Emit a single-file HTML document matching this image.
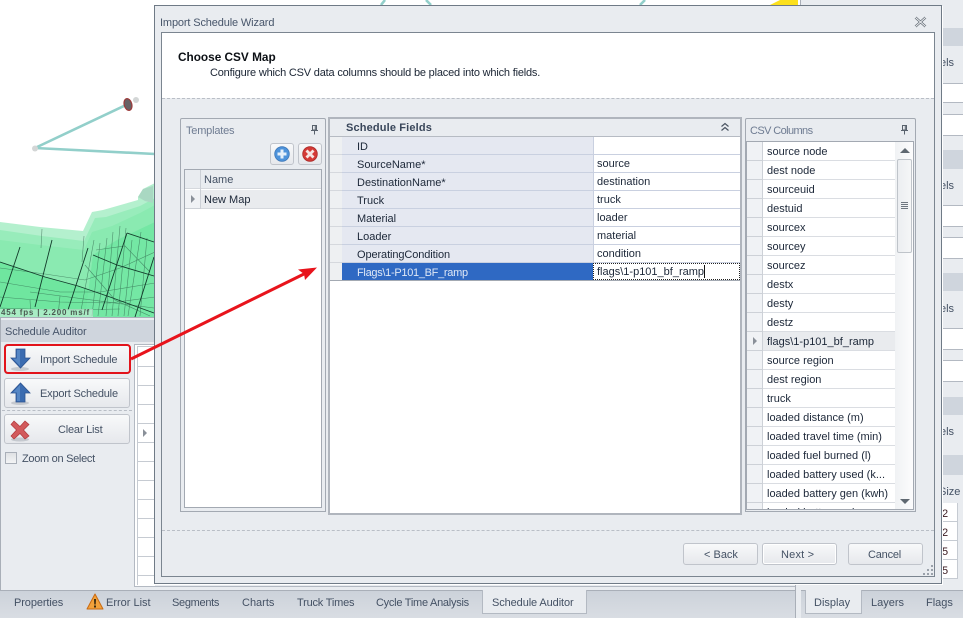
<!DOCTYPE html>
<html><head><meta charset="utf-8"><style>
html,body{margin:0;padding:0;background:#fff}
#p{position:relative;width:963px;height:618px;overflow:hidden;background:#fff;font-family:"Liberation Sans",sans-serif;font-size:11px;color:#445164}
#p div,#p span{position:absolute;box-sizing:border-box}
.t{white-space:nowrap;line-height:14px;margin-top:1px}
.btn{border:1px solid #c0c4cb;border-radius:3px;background:linear-gradient(#f8f9fa,#e6e8ec)}
.d{color:#1c2738}
.tb{letter-spacing:-.1px}
.sb{letter-spacing:-.19px}
.dash{height:1px;border-top:1px dashed #b9bec6}
svg{position:absolute}
</style></head><body><div id="p">

<!-- background map -->
<svg style="left:0;top:0" width="800" height="320" viewBox="0 0 800 320">
<polygon points="0,222 40,227 83,231 92,212 103,210 138,200 138,197 143,189 155,183 155,317 0,317" fill="#b4f0ce"/>
<polygon points="0,230 42,236 84,241 95,218 106,217 140,206 155,198 155,317 0,317" fill="#98ecbb"/>
<polygon points="0,240 40,245 84,250 92,232 112,226 140,213 155,205 155,317 0,317" fill="#8aeab1"/>
<polygon points="0,262 45,277 78,286 110,297 154,313 154,317 0,317" fill="#6fe69f"/>
<polygon points="93,255 117,240 155,222 155,317 85,317" fill="#74e7a4"/>
<polygon points="138,197 143,189 153,186 153,203 145,201" fill="#a9d8c2"/>
<g fill="none" stroke="#2a5a44" stroke-width=".6" opacity=".62">
<path d="M0,268 45,274 85,280 120,268 155,252M0,282 60,292 100,292 155,283M0,297 60,302 110,303 155,297M30,292 154,308M0,308 60,310 120,309"/>
<path d="M42,229 41,248M84,236 82,262M94,240 80,316M100,243 92,316M107,238 98,316M113,232 106,316M120,226 112,316M126,228 118,316M132,240 124,316M141,232 128,316M147,238 140,316"/>
<path d="M85,265 115,300 150,316M96,250 125,246 150,272M30,300 31,316M60,296 58,316"/>
</g>
<g fill="none" stroke="#123a2a" stroke-width=".9">
<path d="M0,262 45,277 78,286 110,297 154,313M93,255 117,265 154,276M127,233 154,242M20,247 0,307M52,240 35,307M88,248 68,310M127,233 102,310M154,257 135,317"/>
</g>
<path d="M35,148 128,104M35,148 155,154" stroke="#92cfca" stroke-width="2.600" fill="none"/>
<path d="M381,5 385,0M431,5 426,0M640,5 645,0" stroke="#92cfca" stroke-width="2.600" fill="none"/>
<circle cx="35" cy="148.500" r="3" fill="#d3d6d6"/><circle cx="136" cy="100" r="3" fill="#d3d6d6"/>
<ellipse cx="128" cy="104.500" rx="3.800" ry="6" transform="rotate(-15 128 104.500)" fill="#676265" stroke="#9c3a3a" stroke-width="1.200"/>
<polygon points="770,5 778,1 780,0 798,0 798,5" fill="#fce01c"/>
</svg>
<div style="left:0;top:309px;width:93px;height:8px;background:rgba(215,240,225,.55)"></div>
<div class="t" style="left:1px;top:305px;font-size:8px;font-weight:bold;color:#4b5a52;letter-spacing:.8px">454 fps | 2.200 ms/f</div>

<!-- left dock -->
<div style="left:0;top:317px;width:155px;height:273px;background:#e9ecf0;border-top:1px solid #a9afb8;border-left:1px solid #a9afb8"></div>
<div style="left:155px;top:584px;width:645px;height:6px;background:#e9ecf0"></div>
<div style="left:134px;top:586px;width:662px;height:1px;background:#b3b9c2"></div>
<div style="left:1px;top:320px;width:154px;height:22px;background:#cfd5dd"></div>
<div class="t" style="left:5px;top:324px;color:#47556a;letter-spacing:-.1px">Schedule Auditor</div>

<div class="btn" style="left:4px;top:344px;width:126px;height:30px"></div>
<div class="t sb" style="left:40px;top:352px">Import Schedule</div>
<svg style="left:10px;top:348px" width="22" height="24" viewBox="0 0 22 24"><ellipse cx="10" cy="21" rx="9" ry="2" fill="#c5c9cf"/><path d="M6,1H15V10H20L10.500,20 1,10H6Z" fill="#3a6bb0" stroke="#2c5390" stroke-width=".8"/><path d="M7,2H10V18L3,10.500H7Z" fill="#5586c4"/></svg>
<div class="btn" style="left:4px;top:378px;width:126px;height:30px"></div>
<div class="t sb" style="left:40px;top:386px">Export Schedule</div>
<svg style="left:10px;top:382px" width="22" height="24" viewBox="0 0 22 24"><ellipse cx="10" cy="21" rx="9" ry="2" fill="#c5c9cf"/><path d="M6,20H15V11H20L10.500,1 1,11H6Z" fill="#3a6bb0" stroke="#2c5390" stroke-width=".8"/><path d="M7,19H10V3L3,10.500H7Z" fill="#5586c4"/></svg>
<div class="dash" style="left:2px;top:410px;width:130px"></div>
<div class="btn" style="left:4px;top:414px;width:126px;height:30px"></div>
<div class="t" style="left:58px;top:422px;letter-spacing:-.2px">Clear List</div>
<svg style="left:10px;top:419px" width="22" height="24" viewBox="0 0 22 24"><ellipse cx="10" cy="20.500" rx="9" ry="2" fill="#c5c9cf"/><path d="M4,2 10,7.500 15,2 19,5.500 13.500,11 19,17 15,20 10,14.500 4,20 1,17 6.500,11 1,5.500Z" fill="#d25a5c" stroke="#b03a3c" stroke-width=".7"/></svg>
<div style="left:5px;top:452px;width:12px;height:12px;border:1px solid #a9afb8;background:linear-gradient(#dfe1e4,#f3f4f5)"></div>
<div class="t" style="left:22px;top:451px;letter-spacing:-.3px">Zoom on Select</div>

<div style="left:134px;top:344px;width:21px;height:243px;border:1px solid #b3b9c2;background:#fff;border-right:0"></div>
<div style="left:137px;top:346px;width:18px;height:239px;border-left:1px solid #c6cbd2;border-top:1px solid #c6cbd2"></div>
<div style="left:137px;top:348px;width:18px;height:237px;background:repeating-linear-gradient(#fff 0,#fff 18px,#c6cbd2 18px,#c6cbd2 19px);border-left:1px solid #c6cbd2"></div>
<svg style="left:142px;top:428px" width="6" height="10"><path d="M1,1 5,5 1,9Z" fill="#8a9099"/></svg>

<!-- bottom tabs -->
<div style="left:0;top:590px;width:796px;height:28px;background:linear-gradient(#ccd2da,#d9dde3);border-top:1px solid #a9afb8"></div>
<div style="left:482px;top:590px;width:105px;height:24px;background:#e9ecf0;border:1px solid #b3b9c2;border-top:0"></div>
<div class="t tb" style="left:14px;top:595px">Properties</div>
<svg style="left:86px;top:593px" width="18" height="17" viewBox="0 0 18 17"><path d="M9,1 17,16H1Z" fill="#f2a13a" stroke="#c96a12" stroke-width="1" stroke-linejoin="round"/><path d="M8,6H10L9.700,11.500H8.300ZM8,12.500H10V14.500H8Z" fill="#3a2a10"/></svg>
<div class="t" style="left:106px;top:595px">Error List</div>
<div class="t" style="left:172px;top:595px;letter-spacing:-.3px">Segments</div>
<div class="t" style="left:242px;top:595px">Charts</div>
<div class="t" style="left:297px;top:595px;letter-spacing:-.2px">Truck Times</div>
<div class="t" style="left:376px;top:595px;letter-spacing:-.26px">Cycle Time Analysis</div>
<div class="t tb" style="left:492px;top:595px">Schedule Auditor</div>

<!-- right dock -->
<div style="left:800px;top:0;width:163px;height:618px;background:#e9ecf0;border-left:1px solid #a9afb8"></div>
<div style="left:795px;top:584px;width:6px;height:34px;background:#e9ecf0;border-left:1px solid #a9afb8"></div>
<div style="left:941px;top:28px;width:22px;height:18px;background:#cfd5dd"></div>
<div style="left:941px;top:150px;width:22px;height:19px;background:#cfd5dd"></div>
<div style="left:941px;top:273px;width:22px;height:18px;background:#cfd5dd"></div>
<div style="left:941px;top:397px;width:22px;height:18px;background:#cfd5dd"></div>
<div style="left:941px;top:455px;width:22px;height:20px;background:#cfd5dd"></div>
<div style="left:941px;top:83px;width:22px;height:20px;background:#fff;border-top:1px solid #b3b9c2;border-bottom:1px solid #b3b9c2"></div>
<div style="left:941px;top:114px;width:22px;height:22px;background:#fff;border-top:1px solid #b3b9c2;border-bottom:1px solid #b3b9c2"></div>
<div style="left:941px;top:205px;width:22px;height:22px;background:#fff;border-top:1px solid #b3b9c2;border-bottom:1px solid #b3b9c2"></div>
<div style="left:941px;top:237px;width:22px;height:22px;background:#fff;border-top:1px solid #b3b9c2;border-bottom:1px solid #b3b9c2"></div>
<div style="left:941px;top:328px;width:22px;height:22px;background:#fff;border-top:1px solid #b3b9c2;border-bottom:1px solid #b3b9c2"></div>
<div style="left:941px;top:360px;width:22px;height:22px;background:#fff;border-top:1px solid #b3b9c2;border-bottom:1px solid #b3b9c2"></div>
<div class="t" style="left:940px;top:55px">els</div>
<div class="t" style="left:940px;top:178px">els</div>
<div class="t" style="left:940px;top:301px">els</div>
<div class="t" style="left:940px;top:424px">els</div>
<div class="t" style="left:939px;top:484px">Size</div>
<div style="left:941px;top:503px;width:22px;height:76px;background:repeating-linear-gradient(#fff 0,#fff 18px,#c6cbd2 18px,#c6cbd2 19px)"></div>
<div style="left:957px;top:503px;width:6px;height:76px;background:#e9ecf0;border-left:1px solid #c6cbd2"></div>
<div class="t" style="left:942px;top:506px;color:#3a1a20">2</div>
<div class="t" style="left:942px;top:525px;color:#3a1a20">2</div>
<div class="t" style="left:942px;top:544px;color:#3a1a20">5</div>
<div class="t" style="left:942px;top:563px;color:#3a1a20">5</div>
<div style="left:801px;top:590px;width:162px;height:28px;background:linear-gradient(#ccd2da,#d9dde3);border-top:1px solid #a9afb8"></div>
<div style="left:805px;top:590px;width:57px;height:24px;background:#e9ecf0;border:1px solid #b3b9c2;border-top:0"></div>
<div class="t" style="left:814px;top:595px">Display</div>
<div class="t" style="left:871px;top:595px">Layers</div>
<div class="t" style="left:926px;top:595px">Flags</div>

<!-- dialog -->
<div style="left:154px;top:5px;width:788px;height:579px;background:#e9ecf0;border:1px solid #6f7a86;box-shadow:1px 1px 0 #fff"></div>
<div class="t" style="left:160px;top:15px;color:#47556a;letter-spacing:-.14px">Import Schedule Wizard</div>
<svg style="left:914px;top:16px" width="13" height="12" viewBox="0 0 13 12"><path d="M1.500,1.500 11.500,10.500M11.500,1.500 1.500,10.500" stroke="#5d6670" stroke-width="2.400" fill="none"/><path d="M1.500,1.500 11.500,10.500M11.500,1.500 1.500,10.500" stroke="#eef0f2" stroke-width="1" fill="none"/></svg>
<div style="left:161px;top:32px;width:774px;height:545px;background:#e9ecf0;border:1px solid #7b8590"></div>
<div style="left:162px;top:33px;width:772px;height:65px;background:#fff"></div>
<div class="dash" style="left:162px;top:98px;width:772px"></div>
<div class="t" style="left:178px;top:49px;font-weight:bold;color:#0b0f14;font-size:11.800px">Choose CSV Map</div>
<div class="t sb" style="left:210px;top:65px;color:#1a2433">Configure which CSV data columns should be placed into which fields.</div>

<!-- templates -->
<div style="left:180px;top:118px;width:146px;height:394px;background:#e9ecf0;border:1px solid #a3a9b2;border-radius:2px 2px 0 0"></div>
<div class="t" style="left:186px;top:123px;color:#6f7c92;letter-spacing:-.2px">Templates</div>
<svg style="left:310px;top:125px" width="9" height="10" viewBox="0 0 9 10"><path d="M2.500,.500H6.500V5H2.500ZM1,5.500H8M4.500,5.500V9.500M5.300,1V5" stroke="#59626d" fill="none"/></svg>
<div class="btn" style="left:270px;top:143px;width:24px;height:22px"></div>
<svg style="left:274px;top:146px" width="16" height="16" viewBox="0 0 16 16"><circle cx="8" cy="8" r="7.300" fill="#4e93db" stroke="#3e78b8" stroke-width=".8"/><path d="M6.500,3.500H9.500V6.500H12.500V9.500H9.500V12.500H6.500V9.500H3.500V6.500H6.500Z" fill="#e6f0fa"/></svg>
<div class="btn" style="left:298px;top:143px;width:24px;height:22px"></div>
<svg style="left:302px;top:146px" width="16" height="16" viewBox="0 0 16 16"><circle cx="8" cy="8" r="7.300" fill="#d43a36" stroke="#aa2a28" stroke-width=".8"/><path d="M5.500,3.500 8,6 10.500,3.500 12.500,5.500 10,8 12.500,10.500 10.500,12.500 8,10 5.500,12.500 3.500,10.500 6,8 3.500,5.500Z" fill="#f6e4e2"/></svg>
<div style="left:184px;top:169px;width:138px;height:339px;background:#fff;border:1px solid #a3a9b2"></div>
<div style="left:185px;top:170px;width:136px;height:19px;background:#e9ecf0;border-bottom:1px solid #d5d8dd"></div>
<div style="left:185px;top:190px;width:136px;height:19px;background:#e9ebee;border-bottom:1px solid #d5d8dd"></div>
<div style="left:200px;top:170px;width:1px;height:39px;background:#ccd0d6"></div>
<div style="left:185px;top:190px;width:15px;height:19px;background:#f0f2f5;border-bottom:1px solid #ccd0d6"></div>
<svg style="left:190px;top:194px" width="6" height="10"><path d="M1,1 5,5 1,9Z" fill="#8a9099"/></svg>
<div class="t" style="left:204px;top:172px">Name</div>
<div class="t d" style="left:204px;top:192px">New Map</div>

<!-- schedule fields -->
<div style="left:328px;top:117px;width:414px;height:398px;background:#fff;border:2px solid #b0b5bd"></div>
<div style="left:330px;top:119px;width:410px;height:18px;background:#e9ecf0;border-bottom:1px solid #b6bbc3"></div>
<div class="t" style="left:346px;top:120px;font-weight:bold;color:#39465a;letter-spacing:.15px">Schedule Fields</div>
<svg style="left:720px;top:122px" width="10" height="10" viewBox="0 0 10 10"><path d="M1.500,4.500 5,1.500 8.500,4.500M1.500,8.500 5,5.500 8.500,8.500" stroke="#4a5462" stroke-width="1.200" fill="none"/></svg>
<div style="left:330px;top:137px;width:12px;height:144px;background:repeating-linear-gradient(#eef0f2 0,#eef0f2 17px,#d5d8dd 17px,#d5d8dd 18px)"></div>
<div style="left:342px;top:137px;width:251px;height:144px;background:repeating-linear-gradient(#e5e8f1 0,#e5e8f1 17px,#c9d0e0 17px,#c9d0e0 18px)"></div>
<div style="left:593px;top:137px;width:147px;height:144px;background:repeating-linear-gradient(#fff 0,#fff 17px,#c9d0e0 17px,#c9d0e0 18px);border-left:1px solid #c9d0e0"></div>
<div style="left:342px;top:263px;width:251px;height:17px;background:#2f69c3"></div>
<div style="left:330px;top:280px;width:410px;height:1px;background:#a3a9b2"></div>
<div style="left:593px;top:263px;width:147px;height:17px;border:1px dotted #222;background:#fff"></div>
<div class="t d" style="left:357px;top:139px">ID</div>
<div class="t d" style="left:357px;top:157px">SourceName*</div>
<div class="t d" style="left:357px;top:175px">DestinationName*</div>
<div class="t d" style="left:357px;top:193px">Truck</div>
<div class="t d" style="left:357px;top:211px">Material</div>
<div class="t d" style="left:357px;top:229px">Loader</div>
<div class="t d" style="left:357px;top:247px;letter-spacing:-.1px">OperatingCondition</div>
<div class="t" style="left:357px;top:265px;color:#dfe8f6;letter-spacing:-.3px">Flags\1-P101_BF_ramp</div>
<div class="t d" style="left:597px;top:156px">source</div>
<div class="t d" style="left:597px;top:174px">destination</div>
<div class="t d" style="left:597px;top:192px">truck</div>
<div class="t d" style="left:597px;top:210px">loader</div>
<div class="t d" style="left:597px;top:228px">material</div>
<div class="t d" style="left:597px;top:246px">condition</div>
<div class="t d" style="left:597px;top:264px">flags\1-p101_bf_ramp</div>
<div style="left:704px;top:265px;width:1px;height:13px;background:#111"></div>

<!-- csv -->
<div style="left:745px;top:118px;width:171px;height:394px;background:#e9ecf0;border:1px solid #a3a9b2;border-radius:2px 2px 0 0"></div>
<div class="t" style="left:750px;top:123px;color:#6f7c92;letter-spacing:-.6px">CSV Columns</div>
<svg style="left:900px;top:125px" width="9" height="10" viewBox="0 0 9 10"><path d="M2.500,.500H6.500V5H2.500ZM1,5.500H8M4.500,5.500V9.500M5.300,1V5" stroke="#59626d" fill="none"/></svg>
<div style="left:746px;top:141px;width:168px;height:369px;background:#fff;border:1px solid #a3a9b2;overflow:hidden"></div>
<div style="left:747px;top:142px;width:16px;height:367px;background:repeating-linear-gradient(#f0f2f5 0,#f0f2f5 18px,#cdd1d7 18px,#cdd1d7 19px);border-right:1px solid #cdd1d7"></div>
<div style="left:763px;top:142px;width:132px;height:367px;background:repeating-linear-gradient(#fff 0,#fff 18px,#dadde2 18px,#dadde2 19px)"></div>
<div style="left:763px;top:332px;width:132px;height:18px;background:#e9ebee"></div>
<svg style="left:752px;top:336px" width="6" height="10"><path d="M1,1 5,5 1,9Z" fill="#8a9099"/></svg>
<div style="left:895px;top:142px;width:18px;height:367px;background:linear-gradient(90deg,#f0f2f4,#fcfcfd)"></div>
<svg style="left:899px;top:147px" width="12" height="7"><path d="M1,6 6,1 11,6Z" fill="#5f6871"/></svg>
<svg style="left:899px;top:498px" width="12" height="7"><path d="M1,1 6,6 11,1Z" fill="#5f6871"/></svg>
<div style="left:897px;top:159px;width:15px;height:94px;background:linear-gradient(90deg,#eceef1,#f5f6f7);border:1px solid #bfc4ca;border-radius:2px"></div>
<div style="left:901px;top:202px;width:7px;height:7px;background:repeating-linear-gradient(#6f7780 0,#6f7780 1px,transparent 1px,transparent 2px)"></div>
<div class="t d" style="left:767px;top:144px">source node</div>
<div class="t d" style="left:767px;top:163px">dest node</div>
<div class="t d" style="left:767px;top:182px">sourceuid</div>
<div class="t d" style="left:767px;top:201px">destuid</div>
<div class="t d" style="left:767px;top:220px">sourcex</div>
<div class="t d" style="left:767px;top:239px">sourcey</div>
<div class="t d" style="left:767px;top:258px">sourcez</div>
<div class="t d" style="left:767px;top:277px">destx</div>
<div class="t d" style="left:767px;top:296px">desty</div>
<div class="t d" style="left:767px;top:315px">destz</div>
<div class="t d" style="left:767px;top:334px">flags\1-p101_bf_ramp</div>
<div class="t d" style="left:767px;top:353px">source region</div>
<div class="t d" style="left:767px;top:372px">dest region</div>
<div class="t d" style="left:767px;top:391px">truck</div>
<div class="t d" style="left:767px;top:410px">loaded distance (m)</div>
<div class="t d" style="left:767px;top:429px">loaded travel time (min)</div>
<div class="t d" style="left:767px;top:448px">loaded fuel burned (l)</div>
<div class="t d" style="left:767px;top:467px">loaded battery used (k...</div>
<div class="t d" style="left:767px;top:486px">loaded battery gen (kwh)</div>
<div style="left:767px;top:505px;width:115px;height:4px;overflow:hidden"><span class="t d" style="left:0;top:0">loaded battery gain</span></div>

<!-- dialog footer -->
<div class="dash" style="left:162px;top:530px;width:772px"></div>
<div class="btn" style="left:683px;top:543px;width:75px;height:22px"></div>
<div class="t" style="left:704px;top:547px">&lt; Back</div>
<div class="btn" style="left:762px;top:543px;width:75px;height:22px;box-shadow:inset 0 0 0 1px #fff"></div>
<div class="t" style="left:781px;top:547px;letter-spacing:.2px">Next &gt;</div>
<div class="btn" style="left:848px;top:543px;width:75px;height:22px"></div>
<div class="t" style="left:868px;top:547px;letter-spacing:-.2px">Cancel</div>
<svg style="left:923px;top:564px" width="11" height="11" viewBox="0 0 11 11"><path d="M8,1H10V3H8ZM4,5H6V7H4ZM8,5H10V7H8ZM0,9H2V11H0ZM4,9H6V11H4ZM8,9H10V11H8Z" fill="#9aa1aa"/></svg>

<!-- annotation -->
<div style="left:4px;top:344px;width:127px;height:30px;border:2px solid #e2131b;border-radius:4px"></div>
<svg style="left:0;top:0" width="963" height="618" viewBox="0 0 963 618"><path d="M131,359 308,272" stroke="#e8141c" stroke-width="3" fill="none"/><path d="M317,267.500 298,269.500 304,274 305,280Z" fill="#e8141c"/></svg>
</div></body></html>
